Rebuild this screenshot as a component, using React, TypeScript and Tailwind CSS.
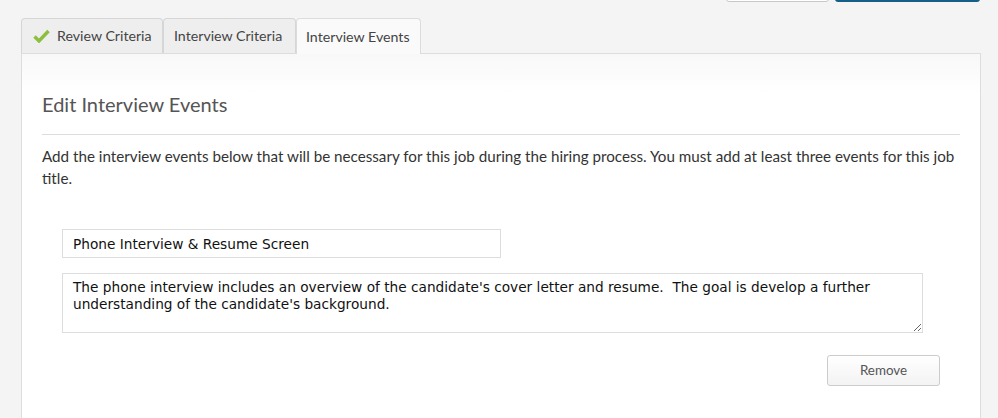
import React from "react";

export default function App() {
  const lato = { fontFamily: "Lato, 'Liberation Sans', sans-serif" } as React.CSSProperties;
  return (
    <div className="w-[998px] h-[418px] overflow-hidden bg-[#f4f4f4]" style={lato}>
      {/* top buttons (cut off) */}
      <div className="h-[2px] overflow-hidden flex items-end justify-end pr-[18px] gap-[6px]">
        <div className="w-[103px] h-[30px] shrink-0 bg-white border border-[#c8c8c8] rounded-[3px]" />
        <div className="w-[145px] h-[30px] shrink-0 bg-[#1d80b3] border border-[#135f87] border-b-2 rounded-[3px]" />
      </div>

      {/* tabs */}
      <div className="mt-[16px] ml-[21px] flex items-end">
        <div className="h-[35px] w-[142px] flex items-center gap-[7px] pl-[11px] bg-[#eeeeee] border border-[#d6d6d6] border-b-0 rounded-t-[4px] text-[14.2px] text-[#444]">
          <svg width="17" height="14" viewBox="0 0 17 14">
            <path d="M1.5 7.5 L6 12 L15.5 2" fill="none" stroke="#8bbf3f" strokeWidth="3.4" strokeLinejoin="miter" />
          </svg>
          <span>Review Criteria</span>
        </div>
        <div className="h-[35px] w-[133px] flex items-center pl-[10px] bg-[#eeeeee] border border-[#d6d6d6] border-b-0 rounded-t-[4px] text-[14.2px] text-[#444]">
          Interview Criteria
        </div>
        <div className="relative z-10 h-[36px] -mb-px w-[125px] flex items-center pl-[9px] bg-[#fafafa] border border-[#dcdcdc] border-b-0 rounded-t-[4px] text-[14.2px] text-[#444]">
          Interview Events
        </div>
      </div>

      {/* panel */}
      <div className="ml-[21px] w-[960px] h-[400px] border border-[#dddddd] bg-[linear-gradient(#f8f8f8,#ffffff_40px)] px-[20px] pt-[38px]">
        <h2 className="text-[20px] leading-[24px] text-[#555] font-normal">Edit Interview Events</h2>
        <div className="mt-[18px] border-t border-[#dddddd]" />
        <p className="mt-[10px] text-[15.2px] leading-[22px] text-[#333]">
          Add the interview events below that will be necessary for this job during the hiring process. You must add at least three events for this job title.
        </p>

        <div className="mt-[40px] pl-[20px]" style={{ fontFamily: "'DejaVu Sans', Verdana, sans-serif" }}>
          <input
            readOnly
            value="Phone Interview & Resume Screen"
            className="block w-[439px] h-[29px] border border-[#dddddd] bg-white px-[10px] text-[13.7px] text-[#111] outline-none"
          />
          <textarea
            readOnly
            value={"The phone interview includes an overview of the candidate's cover letter and resume.  The goal is develop a further understanding of the candidate's background."}
            className="block mt-[15px] w-[861px] h-[60px] border border-[#dddddd] bg-white px-[10px] py-[5px] text-[13.7px] leading-[17px] text-[#111] outline-none resize-y"
          />
          <div className="flex justify-end w-[878px] mt-[22px]">
            <button
              className="w-[113px] h-[31px] border border-[#cccccc] rounded-[3px] bg-[linear-gradient(#ffffff,#f3f3f3)] text-[13.4px] text-[#555]"
              style={lato}
            >
              Remove
            </button>
          </div>
        </div>
      </div>
    </div>
  );
}
